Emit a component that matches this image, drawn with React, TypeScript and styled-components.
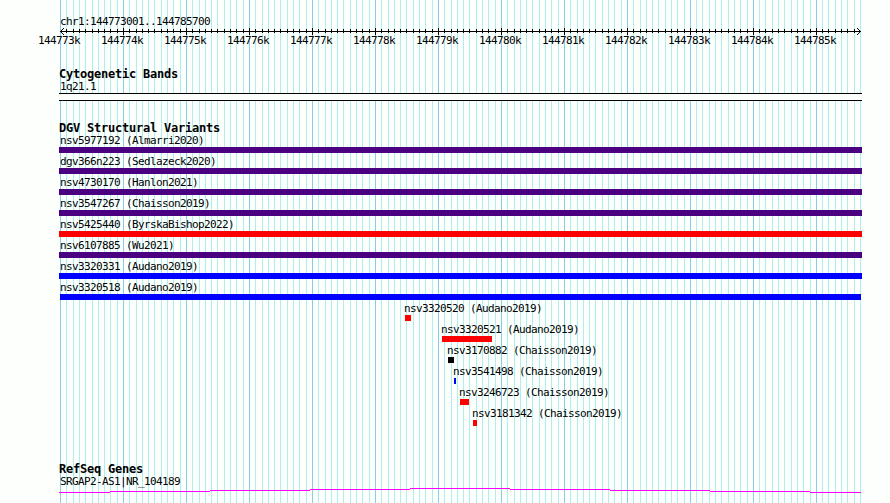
import React from 'react';
import styled, { createGlobalStyle } from 'styled-components';

const GlobalStyle = createGlobalStyle`
  body {
    margin: 0;
    background: #fdfffc;
    overflow: hidden;
  }
`;

const Browser = styled.main`
  position: relative;
  width: 890px;
  height: 503px;
  overflow: hidden;
  box-sizing: border-box;
  padding-top: 15px;
  background: #fdfffc;
  color: #000;
  font-family: 'DejaVu Sans Mono', 'Liberation Mono', monospace;
`;

const GridLines = styled.svg`
  position: absolute;
  top: 0;
  left: 0;
`;

const Content = styled.div`
  position: relative;
  display: flex;
  flex-direction: column;
`;

const Label = styled.div<{ $indent?: number }>`
  margin-left: ${({ $indent = 60 }) => $indent}px;
  height: 13px;
  font-size: 11px;
  line-height: 13px;
  letter-spacing: -0.622px;
  white-space: pre;
`;

const RulerAxis = styled.svg`
  display: block;
  height: 7px;
`;

const RulerLabels = styled.div`
  display: grid;
  grid-template-columns: repeat(13, 63px);
  margin-top: -1px;
  margin-left: 38px;
`;

const Track = styled.section<{ $gap: number }>`
  margin-top: ${({ $gap }) => $gap}px;
`;

const TrackTitle = styled.h2`
  margin: 0 0 0 59px;
  height: 13px;
  font-size: 12px;
  line-height: 15px;
  font-weight: 700;
  letter-spacing: -0.225px;
  white-space: pre;
`;

const Band = styled.div`
  box-sizing: border-box;
  width: 803px;
  height: 8px;
  margin-left: 59px;
  border: solid #000;
  border-width: 1px 0;
  background: #fdfffc;
`;

const VariantRow = styled.div`
  height: 21px;
`;

const VariantBar = styled.div<{ $start: number; $width: number; $color: string }>`
  width: ${({ $width }) => $width}px;
  height: 6px;
  margin-left: ${({ $start }) => $start}px;
  background: ${({ $color }) => $color};
`;

const GenePlot = styled.svg`
  display: block;
`;

const INDIGO = '#4b0082';
const RED = '#ff0000';
const BLUE = '#0000ff';
const BLACK = '#000000';

// one line every 100 bases
const gridX = Array.from({ length: 128 }, (_, i) => 60 + Math.floor(i * 6.2989 + 0.511));

const kiloLabels = Array.from({ length: 13 }, (_, i) => `${144773 + i}k`);

const variants = [
  { name: 'nsv5977192 (Almarri2020)', label: 60, start: 59, width: 803, color: INDIGO },
  { name: 'dgv366n223 (Sedlazeck2020)', label: 60, start: 59, width: 803, color: INDIGO },
  { name: 'nsv4730170 (Hanlon2021)', label: 60, start: 59, width: 803, color: INDIGO },
  { name: 'nsv3547267 (Chaisson2019)', label: 60, start: 59, width: 803, color: INDIGO },
  { name: 'nsv5425440 (ByrskaBishop2022)', label: 60, start: 59, width: 803, color: RED },
  { name: 'nsv6107885 (Wu2021)', label: 60, start: 59, width: 803, color: INDIGO },
  { name: 'nsv3320331 (Audano2019)', label: 60, start: 59, width: 803, color: BLUE },
  { name: 'nsv3320518 (Audano2019)', label: 60, start: 60, width: 801, color: BLUE },
  { name: 'nsv3320520 (Audano2019)', label: 404, start: 405, width: 6, color: RED },
  { name: 'nsv3320521 (Audano2019)', label: 441, start: 442, width: 50, color: RED },
  { name: 'nsv3170882 (Chaisson2019)', label: 447, start: 448, width: 6, color: BLACK },
  { name: 'nsv3541498 (Chaisson2019)', label: 453, start: 454, width: 2, color: BLUE },
  { name: 'nsv3246723 (Chaisson2019)', label: 459, start: 460, width: 9, color: RED },
  { name: 'nsv3181342 (Chaisson2019)', label: 472, start: 473, width: 4, color: RED },
];

// the intron line rises and falls by one pixel at a time
const geneSteps = [
  [59, 110, 4],
  [110, 210, 3],
  [210, 310, 2],
  [310, 410, 1],
  [410, 510, 0],
  [510, 610, 1],
  [610, 710, 2],
  [710, 810, 3],
  [810, 861, 4],
];

const Ruler = () => (
  <>
    <Label>chr1:144773001..144785700</Label>
    <RulerAxis width="890" height="7" shapeRendering="crispEdges">
      <rect x="60" y="3" width="801" height="1" />
      {gridX.slice(1, -1).map((x, i) => {
        const major = (i + 1) % 10 === 0;
        return <rect key={x} x={x} y={major ? 0 : 1} width="1" height={major ? 7 : 4} />;
      })}
      <path d="M63 0h1v1h-1zM62 1h1v1h-1zM61 2h1v1h-1zM61 4h1v1h-1zM62 5h1v1h-1zM63 6h1v1h-1z" />
      <path d="M857 0h1v1h-1zM858 1h1v1h-1zM859 2h1v1h-1zM859 4h1v1h-1zM858 5h1v1h-1zM857 6h1v1h-1z" />
    </RulerAxis>
    <RulerLabels>
      {kiloLabels.map((text) => (
        <Label key={text} $indent={0}>{text}</Label>
      ))}
    </RulerLabels>
  </>
);

const App = () => {
  return (
    <>
      <GlobalStyle />
      <Browser>
        <GridLines width="890" height="503" shapeRendering="crispEdges">
          {gridX.map((x, i) => (
            <rect key={x} x={x} y="0" width="1" height="503" fill={i % 10 === 0 ? '#87ceeb' : '#afeeee'} />
          ))}
        </GridLines>

        <Content>
          <Ruler />

          <Track $gap={20}>
            <TrackTitle>Cytogenetic Bands</TrackTitle>
            <Label>1q21.1</Label>
            <Band />
          </Track>

          <Track $gap={20}>
            <TrackTitle>DGV Structural Variants</TrackTitle>
            {variants.map((v) => (
              <VariantRow key={v.name}>
                <Label $indent={v.label}>{v.name}</Label>
                <VariantBar $start={v.start} $width={v.width} $color={v.color} />
              </VariantRow>
            ))}
          </Track>

          <Track $gap={34}>
            <TrackTitle>RefSeq Genes</TrackTitle>
            <Label>SRGAP2-AS1|NR_104189</Label>
            <GenePlot width="890" height="5" shapeRendering="crispEdges">
              {geneSteps.map(([from, to, y]) => (
                <rect key={from} x={from} y={y} width={to - from} height="1" fill="#ff00ff" />
              ))}
            </GenePlot>
          </Track>
        </Content>
      </Browser>
    </>
  );
};

export default App;
